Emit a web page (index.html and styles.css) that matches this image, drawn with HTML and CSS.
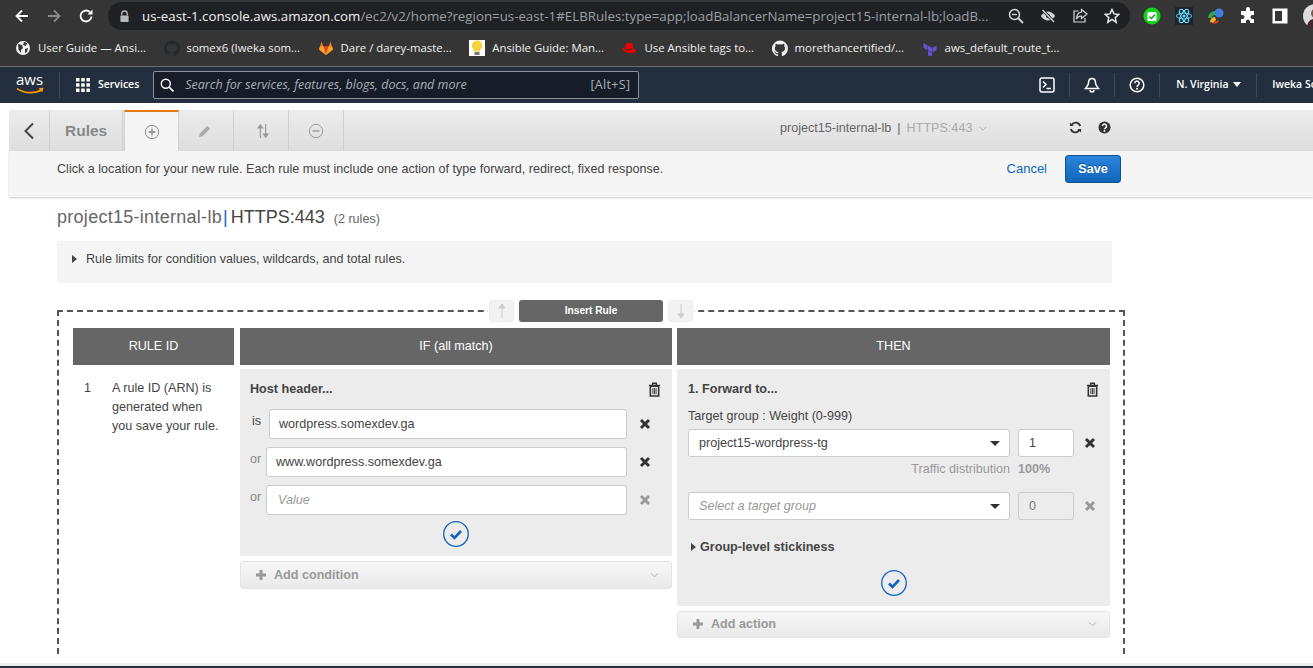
FILE: index.html

```html
<!DOCTYPE html>
<html lang="en">
<head>
    <meta charset="UTF-8">
    <meta name="viewport" content="width=device-width, initial-scale=1.0">
    <title>EC2 Management Console</title>
    <link rel="stylesheet" href="styles.css">
</head>
<body>

    <!-- BROWSER TOOLBAR -->
    <div class="toolbar">
        <svg class="tool" viewBox="0 0 16 16"><path d="M14 8H3M8 2.5L2.5 8 8 13.5" fill="none" stroke="#fff" stroke-width="1.8"/></svg>
        <svg class="tool" viewBox="0 0 16 16"><path d="M2 8h11M8 2.5L13.5 8 8 13.5" fill="none" stroke="#8a8a8a" stroke-width="1.8"/></svg>
        <svg class="tool" viewBox="0 0 16 16"><path d="M13.5 8.5A5.5 5.5 0 1 1 11.8 4" fill="none" stroke="#fff" stroke-width="1.8"/><path d="M14.5 1.5v5h-5z" fill="#fff"/></svg>
        <div class="omnibox">
            <svg class="lock" viewBox="0 0 12 14"><path d="M3 6V4a3 3 0 0 1 6 0v2" fill="none" stroke="#b8b8b8" stroke-width="1.4"/><rect x="1.5" y="6" width="9" height="7" rx="1" fill="#b8b8b8"/></svg>
            <div class="url"><b>us-east-1.console.aws.amazon.com</b>/ec2/v2/home?region=us-east-1#ELBRules:type=app;loadBalancerName=project15-internal-lb;loadB...</div>
            <div class="omni-icons">
                <svg viewBox="0 0 16 16"><circle cx="6.5" cy="6.5" r="5" fill="none" stroke="#d6d6d6" stroke-width="1.5"/><path d="M10 10l5 5" stroke="#d6d6d6" stroke-width="1.8"/><path d="M4 6.5h5" stroke="#d6d6d6" stroke-width="1.3"/></svg>
                <svg viewBox="0 0 16 16"><path d="M1 8s2.5-4.5 7-4.5S15 8 15 8s-2.5 4.5-7 4.5S1 8 1 8z" fill="#d6d6d6"/><circle cx="8" cy="8" r="2" fill="#202124"/><path d="M2.5 2L14 14" stroke="#202124" stroke-width="3"/><path d="M2.5 2L14 14" stroke="#d6d6d6" stroke-width="1.4"/></svg>
                <svg viewBox="0 0 16 16"><path d="M6.5 3H2v11h11v-4" fill="none" stroke="#d6d6d6" stroke-width="1.2"/><path d="M9.5 1.5L15 6l-5.5 4.5V8C7 8 5.5 9 4.5 11c0-4 2-6.5 5-7z" fill="none" stroke="#d6d6d6" stroke-width="1.2"/></svg>
                <svg viewBox="0 0 16 16"><path d="M8 1.5l2 4.4 4.8.5-3.600 3.200 1 4.700L8 11.500l-4.200 2.800 1-4.700L1.200 6.400 6 5.900z" fill="none" stroke="#e8e8e8" stroke-width="1.5"/></svg>
            </div>
        </div>
        <div class="extensions">
            <svg viewBox="0 0 18 18"><circle cx="9" cy="9" r="8.5" fill="#15d31c"/><rect x="4.5" y="5" width="9" height="9" rx="1.5" fill="#fff"/><path d="M6.5 9.5l2 2 3.500-4" fill="none" stroke="#15a31c" stroke-width="1.5"/></svg>
            <svg viewBox="0 0 18 18"><rect width="18" height="18" fill="#20232a"/><g fill="none" stroke="#61dafb"><ellipse cx="9" cy="9" rx="7.5" ry="3"/><ellipse cx="9" cy="9" rx="7.5" ry="3" transform="rotate(60 9 9)"/><ellipse cx="9" cy="9" rx="7.5" ry="3" transform="rotate(120 9 9)"/></g><circle cx="9" cy="9" r="1.5" fill="#61dafb"/></svg>
            <svg viewBox="0 0 18 18"><path d="M1 11a7 7 0 0 1 7-7v4a3 3 0 0 0-3 3z" fill="#2ba84a"/><path d="M3 15a5 5 0 0 1 5-5l1 3-3 3z" fill="#f0b429"/><circle cx="12" cy="6" r="4.5" fill="#3f7fd9"/><path d="M5 16l6-3 1 2-4 2z" fill="#d9392b"/></svg>
            <svg viewBox="0 0 18 18"><path d="M7 2a2 2 0 0 1 4 0v2h4v4h-1.5a2 2 0 0 0 0 4H15v4h-4v-1.5a2 2 0 0 0-4 0V16H2v-4h1.5a2 2 0 0 0 0-4H2V4h5z" fill="#fff"/></svg>
            <svg viewBox="0 0 18 18"><rect x="1.5" y="1.5" width="15" height="15" fill="#fff"/><rect x="4" y="4" width="7" height="10" fill="#353535"/></svg>
            <svg class="avatar" viewBox="0 0 18 18"><circle cx="9" cy="9" r="9" fill="#dcdcdc"/><circle cx="9.5" cy="7" r="3.5" fill="#7a5a4a"/><path d="M3 18c0-5 3-7 6-7s7 2 7 7z" fill="#3a2a2e"/></svg>
        </div>
    </div>

    <!-- BOOKMARKS -->
    <div class="bookmarks">
        <div class="bookmark">
            <svg viewBox="0 0 16 16"><circle cx="8" cy="8" r="7" fill="#f2f2f2"/><path d="M3 4l4 1 1 3-2 2v3L3.5 9.5zM9 2l3 1-1 3-3-1zM10 9l3-1-1 4-2 1z" fill="#353535"/></svg>
            <span>User Guide — Ansi...</span>
        </div>
        <div class="bookmark">
            <svg viewBox="0 0 16 16"><path class="gh-dark" d="M8 .5a8 8 0 0 0-2.5 15.6c.4.1.5-.2.5-.4v-1.400c-2.200.5-2.700-1-2.700-1-.4-.9-.9-1.200-.9-1.200-.7-.5.1-.5.1-.5.8.1 1.200.8 1.200.8.7 1.200 1.900.9 2.300.7.1-.5.3-.9.5-1.100-1.800-.2-3.700-.9-3.700-4 0-.9.3-1.600.8-2.100-.1-.2-.4-1 .1-2.100 0 0 .7-.2 2.200.8a7.600 7.600 0 0 1 4 0c1.500-1 2.200-.8 2.200-.8.4 1.100.2 1.900.1 2.100.5.6.8 1.300.8 2.100 0 3.100-1.900 3.800-3.700 4 .3.3.6.8.6 1.500v2.200c0 .2.1.5.5.4A8 8 0 0 0 8 .5z"/></svg>
            <span>somex6 (Iweka som...</span>
        </div>
        <div class="bookmark">
            <svg viewBox="0 0 16 16"><path d="M8 15L1 9.5l1-3L3.5 1.5 5.5 6.5h5L12.5 1.5 14 6.5l1 3z" fill="#fc6d26"/><path d="M8 15L5.5 6.5h5z" fill="#e24329"/><path d="M8 15L1 9.5l1-3h3.500zM8 15l7-5.500-1-3h-3.500z" fill="#fca326"/></svg>
            <span>Dare / darey-maste...</span>
        </div>
        <div class="bookmark">
            <svg viewBox="0 0 16 16"><rect width="16" height="16" fill="#fff"/><path d="M8 .5a5.200 5.200 0 0 0-3 9.400V11.500h6V9.900A5.200 5.200 0 0 0 8 .5z" fill="#f5d33c"/><rect x="5.5" y="12" width="5" height="3" fill="#777"/></svg>
            <span>Ansible Guide: Man...</span>
        </div>
        <div class="bookmark">
            <svg viewBox="0 0 16 16"><path d="M3.5 9.5L5 4c.3-1.300 1.200-1.500 2.200-1 .7.3 1 .3 1.800 0 1.200-.5 2-.2 2.300 1l1.200 4.500z" fill="#e00"/><path d="M1 8.5c.8-.3 2-.1 2.500 1 2.800 1.500 6.500 1.300 9-1 1.200.3 2.500 1.200 2.500 2.300 0 1.700-2.500 2.700-5.500 2.400C6 13 1 10.500 1 8.500z" fill="#e00"/></svg>
            <span>Use Ansible tags to...</span>
        </div>
        <div class="bookmark">
            <svg viewBox="0 0 16 16"><path class="gh-light" d="M8 .5a8 8 0 0 0-2.5 15.6c.4.1.5-.2.5-.4v-1.400c-2.200.5-2.700-1-2.700-1-.4-.9-.9-1.200-.9-1.200-.7-.5.1-.5.1-.5.8.1 1.200.8 1.200.8.7 1.200 1.900.9 2.300.7.1-.5.3-.9.5-1.100-1.800-.2-3.700-.9-3.700-4 0-.9.3-1.600.8-2.100-.1-.2-.4-1 .1-2.100 0 0 .7-.2 2.200.8a7.600 7.600 0 0 1 4 0c1.500-1 2.200-.8 2.200-.8.4 1.100.2 1.900.1 2.100.5.6.8 1.300.8 2.100 0 3.100-1.900 3.800-3.700 4 .3.3.6.8.6 1.500v2.200c0 .2.1.5.5.4A8 8 0 0 0 8 .5z"/></svg>
            <span>morethancertified/...</span>
        </div>
        <div class="bookmark">
            <svg viewBox="0 0 16 16"><path d="M6 5.5l4 2.300v4.700L6 10.200zM10.500 7.800l4-2.300v4.700l-4 2.300zM1.500 3l4 2.300V10l-4-2.300zM6 10.700l4 2.300v3L6 15.500z" fill="#6a4fd8"/></svg>
            <span>aws_default_route_t...</span>
        </div>
    </div>

    <!-- AWS NAV -->
    <div class="aws-nav">
        <div class="aws-logo">
            <span>aws</span>
            <svg viewBox="0 0 30 9"><path d="M1 1.5c8 5.5 19 5.5 26 1" fill="none" stroke="#f90" stroke-width="1.8"/><path d="M23.5 1l5-.5-1.500 5z" fill="#f90"/></svg>
        </div>
        <div class="services">
            <svg viewBox="0 0 14 14" class="grid-icon"><path d="M0 0h3.500v3.500H0zM5.200 0h3.500v3.500H5.200zM10.400 0h3.500v3.500h-3.500zM0 5.200h3.500v3.500H0zM5.200 5.200h3.500v3.500H5.200zM10.400 5.200h3.500v3.500h-3.500zM0 10.400h3.500v3.500H0zM5.200 10.400h3.500v3.500H5.200zM10.400 10.400h3.500v3.500h-3.500z" fill="#fff"/></svg>
            <span>Services</span>
        </div>
        <div class="search">
            <svg viewBox="0 0 14 14"><circle cx="5.8" cy="5.8" r="4.5" fill="none" stroke="#fff" stroke-width="1.4"/><path d="M9 9l4.500 4.500" stroke="#fff" stroke-width="1.6"/></svg>
            <span class="search-hint">Search for services, features, blogs, docs, and more</span>
            <span class="search-key">[Alt+S]</span>
        </div>
        <div class="nav-right">
            <div class="nav-cell">
                <svg viewBox="0 0 16 16"><rect x="1" y="1" width="14" height="14" rx="2" fill="none" stroke="#fff" stroke-width="1.5"/><path d="M4 4.5L7 7.5 4 10.5M7.5 11.5H12" fill="none" stroke="#fff" stroke-width="1.4"/></svg>
            </div>
            <div class="nav-cell">
                <svg viewBox="0 0 16 16"><path d="M8 1.5c2.500 0 3.500 2 3.500 4.500 0 2 2 4 3 5.500h-13c1-1.500 3-3.500 3-5.500C4.500 3.500 5.500 1.500 8 1.500z" fill="none" stroke="#fff" stroke-width="1.5"/><path d="M6 13a2 2 0 0 0 4 0" fill="none" stroke="#fff" stroke-width="1.4"/></svg>
            </div>
            <div class="nav-cell">
                <svg viewBox="0 0 16 16"><circle cx="8" cy="8" r="6.8" fill="none" stroke="#fff" stroke-width="1.5"/><path d="M5.8 6.300a2.200 2.200 0 1 1 3.400 1.800c-.8.5-1.200 1-1.200 1.900" fill="none" stroke="#fff" stroke-width="1.5"/><circle cx="8" cy="11.8" r="1" fill="#fff"/></svg>
            </div>
            <div class="nav-cell region"><span>N. Virginia</span><i class="nav-caret"></i></div>
            <div class="nav-cell account"><span>Iweka Somex</span></div>
        </div>
    </div>

    <!-- MAIN -->
    <div class="page">
        <div class="tabbar">
            <div class="tab tab-back">
                <svg viewBox="0 0 12 18"><path d="M10 1.5L2.5 9 10 16.5" fill="none" stroke="#444" stroke-width="2"/></svg>
            </div>
            <div class="tab tab-title">Rules</div>
            <div class="tab tab-active">
                <svg viewBox="0 0 18 18"><circle cx="9" cy="9" r="7.5" fill="none" stroke="#888" stroke-width="1.1"/><path d="M9 5v8M5 9h8" stroke="#888" stroke-width="1.5"/></svg>
            </div>
            <div class="tab tab-edit">
                <svg viewBox="0 0 14 14"><path d="M1 13l.8-3.500 7.500-7.500 2.700 2.700-7.500 7.500z" fill="#aaa"/></svg>
            </div>
            <div class="tab">
                <svg viewBox="0 0 14 18"><path d="M4 17V3M1.500 5.500L4 2l2.500 3.500z" stroke="#999" stroke-width="1.3" fill="#999"/><path d="M10 1v14M7.500 12.500L10 16l2.500-3.500z" stroke="#999" stroke-width="1.3" fill="#999"/></svg>
            </div>
            <div class="tab tab-minus">
                <svg viewBox="0 0 18 18"><circle cx="9" cy="9" r="7.5" fill="none" stroke="#999" stroke-width="1.1"/><path d="M5 9h8" stroke="#999" stroke-width="1.5"/></svg>
            </div>
            <div class="tab-info">
                <span class="lb-name">project15-internal-lb</span>
                <span class="lb-sep">|</span>
                <span class="lb-port">HTTPS:443</span>
                <svg class="lb-chev" viewBox="0 0 10 6"><path d="M1 1l4 4 4-4" fill="none" stroke="#aaa"/></svg>
            </div>
            <div class="tab-tools">
                <svg viewBox="0 0 14 14"><path d="M12 5.500A5 5 0 0 0 3 4M2 8.500A5 5 0 0 0 11 10" fill="none" stroke="#333" stroke-width="2"/><path d="M1 1.500v4h4zM13 12.500v-4H9z" fill="#333"/></svg>
                <svg viewBox="0 0 14 14"><circle cx="7" cy="7" r="6.5" fill="#333"/><path d="M4.800 5.400a2.200 2.200 0 1 1 3.400 1.900c-.8.5-1.200.8-1.200 1.500" fill="none" stroke="#fff" stroke-width="1.6"/><rect x="6.1" y="9.8" width="1.8" height="1.8" fill="#fff"/></svg>
            </div>
        </div>
        <div class="hintbar">
            <p>Click a location for your new rule. Each rule must include one action of type forward, redirect, fixed response.</p>
            <a class="cancel">Cancel</a>
            <button class="save">Save</button>
        </div>

        <div class="content">
            <h2 class="title"><span class="title-lb">project15-internal-lb</span> <span class="title-sep">|</span> HTTPS:443 <small>(2 rules)</small></h2>
            <div class="limits"><i class="caret"></i>Rule limits for condition values, wildcards, and total rules.</div>

            <div class="rule-frame">
                <div class="insert">
                    <div class="arrow-btn"><svg viewBox="0 0 10 16"><path d="M5 15V3M2 5l3-4 3 4z" stroke="#ccc" fill="#ccc"/></svg></div>
                    <div class="insert-btn">Insert Rule</div>
                    <div class="arrow-btn"><svg viewBox="0 0 10 16"><path d="M5 1v12M2 11l3 4 3-4z" stroke="#ccc" fill="#ccc"/></svg></div>
                </div>

                <div class="rule-grid">
                    <div class="col-head">RULE ID</div>
                    <div class="col-head">IF (all match)</div>
                    <div class="col-head">THEN</div>

                    <div class="rule-id">
                        <span class="rule-num">1</span>
                        <p>A rule ID (ARN) is<br>generated when<br>you save your rule.</p>
                    </div>

                    <!-- IF column -->
                    <div>
                        <div class="panel panel-if">
                            <div class="panel-head">
                                <span>Host header...</span>
                                <svg class="trash" viewBox="0 0 14 16"><path d="M1 3.500h12M5 3V1.200h4V3" fill="none" stroke="#333" stroke-width="1.5"/><path d="M2.500 4.500h9V15h-9z" fill="none" stroke="#333" stroke-width="1.7"/><path d="M5.300 6.500v6.500M7 6.500v6.500M8.700 6.500v6.500" stroke="#333"/></svg>
                            </div>
                            <div class="conds">
                                <div class="cond">
                                    <label class="cond-is">is</label>
                                    <div class="input">wordpress.somexdev.ga</div>
                                    <svg class="x" viewBox="0 0 12 12"><path d="M2 2l8 8M10 2l-8 8" stroke="#333" stroke-width="3"/></svg>
                                </div>
                                <div class="cond">
                                    <label>or</label>
                                    <div class="input">www.wordpress.somexdev.ga</div>
                                    <svg class="x" viewBox="0 0 12 12"><path d="M2 2l8 8M10 2l-8 8" stroke="#333" stroke-width="3"/></svg>
                                </div>
                                <div class="cond">
                                    <label>or</label>
                                    <div class="input placeholder">Value</div>
                                    <svg class="x" viewBox="0 0 12 12"><path d="M2 2l8 8M10 2l-8 8" stroke="#999" stroke-width="3"/></svg>
                                </div>
                            </div>
                            <svg class="confirm" viewBox="0 0 26 26"><circle cx="13" cy="13" r="12.3" fill="none" stroke="#1166bb" stroke-width="1.3"/><path d="M8 13.500l3.500 3.500 6.500-7" fill="none" stroke="#1166bb" stroke-width="2.6"/></svg>
                        </div>
                        <div class="add-bar">
                            <svg viewBox="0 0 12 12"><path d="M6 1v10M1 6h10" stroke="#999" stroke-width="3"/></svg>
                            <span>Add condition</span>
                            <svg class="add-chev" viewBox="0 0 10 6"><path d="M1 1l4 4 4-4" fill="none" stroke="#aaa"/></svg>
                        </div>
                    </div>

                    <!-- THEN column -->
                    <div>
                        <div class="panel panel-then">
                            <div class="panel-head">
                                <span>1. Forward to...</span>
                                <svg class="trash" viewBox="0 0 14 16"><path d="M1 3.500h12M5 3V1.200h4V3" fill="none" stroke="#333" stroke-width="1.5"/><path d="M2.500 4.500h9V15h-9z" fill="none" stroke="#333" stroke-width="1.7"/><path d="M5.300 6.500v6.500M7 6.500v6.500M8.700 6.500v6.500" stroke="#333"/></svg>
                            </div>
                            <div class="tg-label">Target group : Weight (0-999)</div>
                            <div class="tg-row tg-first">
                                <div class="select"><span>project15-wordpress-tg</span><i class="select-caret"></i></div>
                                <div class="weight">1</div>
                                <svg class="x" viewBox="0 0 12 12"><path d="M2 2l8 8M10 2l-8 8" stroke="#333" stroke-width="3"/></svg>
                            </div>
                            <div class="traffic"><span class="traffic-label">Traffic distribution</span><b>100%</b></div>
                            <div class="tg-row">
                                <div class="select placeholder"><span>Select a target group</span><i class="select-caret"></i></div>
                                <div class="weight weight-off">0</div>
                                <svg class="x" viewBox="0 0 12 12"><path d="M2 2l8 8M10 2l-8 8" stroke="#999" stroke-width="3"/></svg>
                            </div>
                            <div class="stickiness"><i class="caret"></i>Group-level stickiness</div>
                            <svg class="confirm" viewBox="0 0 26 26"><circle cx="13" cy="13" r="12.3" fill="none" stroke="#1166bb" stroke-width="1.3"/><path d="M8 13.500l3.500 3.500 6.500-7" fill="none" stroke="#1166bb" stroke-width="2.6"/></svg>
                        </div>
                        <div class="add-bar add-action">
                            <svg viewBox="0 0 12 12"><path d="M6 1v10M1 6h10" stroke="#999" stroke-width="3"/></svg>
                            <span>Add action</span>
                            <svg class="add-chev" viewBox="0 0 10 6"><path d="M1 1l4 4 4-4" fill="none" stroke="#aaa"/></svg>
                        </div>
                    </div>
                </div>
            </div>
        </div>
    </div>

    <div class="footer"></div>

</body>
</html>
```

FILE: styles.css

```css
* { margin: 0; padding: 0; box-sizing: border-box; }
body {
    height: 100vh;
    display: flex;
    flex-direction: column;
    overflow: hidden;
    background: #fff;
    font-family: "Liberation Sans", Arial, sans-serif;
    font-size: 12.6px;
    color: #444;
}

/* browser chrome */
.toolbar {
    height: 32px;
    flex: none;
    display: flex;
    align-items: center;
    background: #353535;
    padding-left: 14px;
}
.tool { width: 16px; height: 16px; margin-right: 16px; flex: none; }
.omnibox {
    width: 1022px;
    height: 28px;
    margin-left: -2px;
    border-radius: 14px;
    background: #202124;
    display: flex;
    align-items: center;
    padding-left: 11px;
    flex: none;
}
.lock { width: 11px; height: 13px; margin-right: 12px; flex: none; }
.url {
    width: 858px;
    font-family: "Open Sans", sans-serif;
    font-size: 13.3px;
    color: #9aa0a6;
    white-space: nowrap;
    overflow: hidden;
}
.url b { font-weight: 400; color: #f1f1f1; }
.omni-icons { display: flex; gap: 16px; margin-left: 8px; }
.omni-icons svg { width: 16px; height: 16px; }
.extensions {
    display: flex;
    align-items: center;
    gap: 14px;
    margin-left: 13px;
}
.extensions svg { width: 18px; height: 18px; flex: none; }
.extensions .avatar { width: 24px; height: 24px; }

.bookmarks {
    height: 34px;
    flex: none;
    display: flex;
    align-items: center;
    gap: 17.5px;
    background: #353535;
    padding: 0 0 3px 15px;
    font-family: "Open Sans", sans-serif;
    font-size: 11.4px;
    color: #f1f1f1;
    white-space: nowrap;
    overflow: hidden;
}
.bookmark { display: flex; align-items: center; gap: 7px; flex: none; }
.bookmark svg { width: 16px; height: 16px; flex: none; }
.gh-dark { fill: #24292e; }
.gh-light { fill: #f1f1f1; }

/* aws console nav */
.aws-nav {
    height: 37px;
    flex: none;
    display: flex;
    align-items: center;
    background: #232f3e;
    border-top: 1px solid #6b6b6b;
    padding: 0 0 1px 16px;
    color: #fff;
    white-space: nowrap;
    overflow: hidden;
    font-family: "Open Sans", sans-serif;
}
.aws-logo {
    width: 44px;
    height: 26px;
    border-right: 1px solid #414b58;
    display: flex;
    flex-direction: column;
    flex: none;
}
.aws-logo span { font-size: 15px; line-height: 15px; }
.aws-logo svg { width: 29px; height: 9px; }
.services {
    display: flex;
    align-items: center;
    gap: 8px;
    margin-left: 16px;
    font-size: 10.5px;
    font-weight: 600;
    flex: none;
}
.services span { margin-bottom: 2px; }
.grid-icon { width: 14px; height: 14px; }
.search {
    width: 486px;
    height: 28px;
    margin-left: 14px;
    flex: none;
    display: flex;
    align-items: center;
    background: #171d28;
    border: 1px solid #8a9199;
    border-radius: 2px;
    padding: 0 8px 0 6px;
    font-size: 12.5px;
    color: #a9b0b8;
}
.search svg { width: 14px; height: 14px; margin-right: 11px; }
.search-hint { font-style: italic; flex: 1; }
.search-key { letter-spacing: 0.3px; }
.nav-right { display: flex; align-items: center; margin-left: 386px; flex: none; }
.nav-cell {
    height: 24px;
    width: 45px;
    display: flex;
    align-items: center;
    justify-content: center;
    border-right: 1px solid #414b58;
    font-size: 10.5px;
    font-weight: 600;
    flex: none;
}
.nav-cell span { margin-bottom: 2px; }
.nav-cell svg { width: 16px; height: 16px; }
.region { width: 97px; gap: 4px; justify-content: flex-start; padding-left: 16px; }
.nav-caret {
    border-left: 4px solid transparent;
    border-right: 4px solid transparent;
    border-top: 5px solid #fff;
}
.account { border: 0; width: 90px; justify-content: flex-start; padding-left: 15px; }

/* tab bar */
.page { flex: 1; min-height: 0; overflow: hidden; padding-top: 7px; }
.tabbar {
    height: 41px;
    margin-left: 9px;
    display: flex;
    background: linear-gradient(#ececec, #dedede);
}
.tab {
    width: 52px;
    margin-right: 3px;
    display: flex;
    align-items: center;
    justify-content: center;
    border-right: 1px solid #cfcfcf;
    flex: none;
}
.tab svg { width: 16px; height: 16px; }
.tab-back { width: 41px; }
.tab-back svg { width: 12px; height: 18px; }
.tab-title {
    width: 70px;
    margin-right: 1px;
    justify-content: flex-start;
    padding-left: 12px;
    font-size: 15.5px;
    font-weight: 700;
    color: #888;
}
.tab-active {
    width: 55px;
    background: #f5f5f5;
    border-top: 2px solid #e47911;
    border-left: 1px solid #cfcfcf;
}
.tab-edit svg { width: 14px; height: 14px; margin-right: 6px; }
.tab-minus svg { margin-right: 4px; }
.tab-info {
    margin-left: 433px;
    display: flex;
    align-items: center;
    gap: 6px;
    height: 36px;
    white-space: nowrap;
}
.lb-name { color: #666; }
.lb-sep { color: #666; }
.lb-port { color: #aaa; }
.lb-chev { width: 8px; height: 5px; margin-left: 1px; }
.tab-tools { display: flex; gap: 16px; margin-left: 82px; height: 34px; align-items: center; }
.tab-tools svg { width: 13px; height: 13px; }

.hintbar {
    height: 46px;
    margin-left: 9px;
    padding: 4px 192px 0 48px;
    display: flex;
    align-items: flex-start;
    background: #f5f5f5;
    box-shadow: 0 1px 2px rgba(0, 0, 0, 0.2);
}
.hintbar p { flex: 1; line-height: 28px; color: #444; }
.cancel { line-height: 28px; color: #1166bb; margin-right: 18px; font-size: 13px; }
.save {
    width: 56px;
    height: 28px;
    border: 1px solid #15508d;
    border-radius: 3px;
    background: linear-gradient(#2a85dc, #1166bb);
    color: #fff;
    font: 700 12.6px "Liberation Sans", Arial, sans-serif;
    text-shadow: 0 -1px 0 #0b4f91;
}

/* page content */
.content { padding: 9px 0 0 57px; }
.title { font-size: 18px; font-weight: 400; line-height: 22px; color: #444; }
.title-lb { color: #666; letter-spacing: 0.28px; }
.title-sep { color: #1166bb; margin: 0 -2px 0 -4px; }
.title small { font-size: 12.6px; color: #666; margin-left: 4px; }
.limits {
    width: 1055px;
    height: 42px;
    margin-top: 11px;
    padding: 11px 15px;
    background: #f5f5f5;
    line-height: 14px;
}
.caret {
    display: inline-block;
    border-top: 4px solid transparent;
    border-bottom: 4px solid transparent;
    border-left: 5px solid #444;
    margin-right: 9px;
}

/* rule frame */
.rule-frame {
    position: relative;
    width: 1068px;
    height: 344px;
    margin-top: 27px;
    padding: 16px 15px 0 14px;
    border: 2px dashed #555;
    border-bottom: 0;
}
.insert {
    position: absolute;
    top: -12px;
    left: 429px;
    display: flex;
    gap: 5px;
    padding: 0 1px;
    background: #fff;
}
.arrow-btn {
    width: 25px;
    height: 22px;
    display: flex;
    align-items: center;
    justify-content: center;
    background: #f2f2f2;
    border-radius: 3px;
    border: 1px solid #ededed;
}
.arrow-btn svg { width: 10px; height: 16px; }
.insert-btn {
    width: 144px;
    height: 22px;
    background: #666;
    border-radius: 3px;
    color: #fff;
    font-size: 10.2px;
    font-weight: 700;
    line-height: 22px;
    text-align: center;
}
.rule-grid {
    display: grid;
    grid-template-columns: 161px 432px 432px;
    column-gap: 6px;
    row-gap: 4px;
    align-items: start;
}
.rule-grid > :nth-child(3n) { margin-left: -1px; }
.col-head {
    height: 37px;
    background: #666;
    color: #fff;
    line-height: 37px;
    text-align: center;
}
.rule-id { display: flex; padding: 10px 0 0 11px; line-height: 19px; white-space: nowrap; }
.rule-num { width: 28px; flex: none; }

.panel { background: #ececec; padding: 0 10px; }
.panel-if { height: 187px; }
.panel-then { height: 237px; padding-left: 11px; }
.panel-head {
    height: 32px;
    display: flex;
    align-items: center;
    justify-content: space-between;
    padding: 8px 1px 0 0;
    font-weight: 700;
    color: #444;
}
.trash { width: 13px; height: 15px; }
.conds { padding-top: 8px; }
.cond {
    height: 30px;
    margin-bottom: 8px;
    display: flex;
    align-items: center;
}
.cond label { width: 16px; padding: 0 0 6px 0; color: #888; flex: none; }
.cond .cond-is { width: 19px; padding-left: 2px; color: #444; }
.input {
    flex: 1;
    height: 30px;
    line-height: 28px;
    padding: 0 9px;
    background: #fff;
    border: 1px solid #ccc;
    border-radius: 3px;
    color: #444;
}
.placeholder { color: #999; font-style: italic; }
.input.placeholder { padding-left: 11px; }
.cond .x { margin: 0 11px 0 12px; }
.x { width: 12px; height: 12px; flex: none; }
.confirm { display: block; width: 26px; height: 26px; margin: 0 auto; }
.panel-if .confirm { margin-top: -2px; }

.add-bar {
    height: 28px;
    margin-top: 5px;
    display: flex;
    align-items: center;
    padding: 0 12px 0 14px;
    border: 1px solid #e4e4e4;
    border-radius: 3px;
    background: linear-gradient(#f7f7f7, #e9e9e9);
    font-weight: 700;
    color: #999;
}
.add-action { height: 27px; padding-bottom: 2px; }
.add-bar svg { width: 12px; height: 12px; margin-right: 7px; flex: none; }
.add-bar span { flex: 1; }
.add-bar .add-chev { width: 9px; height: 6px; margin: 0; }

.tg-label { margin-top: 7px; line-height: 16px; }
.tg-row { display: flex; align-items: center; margin-top: 6px; }
.tg-first { margin-top: 5px; }
.select {
    width: 322px;
    height: 28px;
    display: flex;
    align-items: center;
    justify-content: space-between;
    padding: 0 9px 0 10px;
    background: #fff;
    border: 1px solid #ccc;
    border-radius: 3px;
}
.select-caret {
    border-left: 5px solid transparent;
    border-right: 5px solid transparent;
    border-top: 5px solid #333;
}
.weight {
    width: 56px;
    height: 28px;
    margin: 0 10px 0 8px;
    padding-left: 10px;
    line-height: 26px;
    background: #fff;
    border: 1px solid #ccc;
    border-radius: 3px;
}
.weight-off { background: #ececec; color: #777; }
.traffic { display: flex; margin: 5px 0 14px; height: 16px; line-height: 14px; color: #999; }
.traffic-label { width: 322px; text-align: right; margin-right: 8px; }
.stickiness { margin-top: 20px; font-weight: 700; color: #444; padding-left: 3px; }
.stickiness .caret { margin-right: 4px; }
.panel-then .confirm { margin-top: 16px; }

.footer {
    height: 5px;
    flex: none;
    background: #232f3e;
    border-top: 3px solid #eee;
}
```
